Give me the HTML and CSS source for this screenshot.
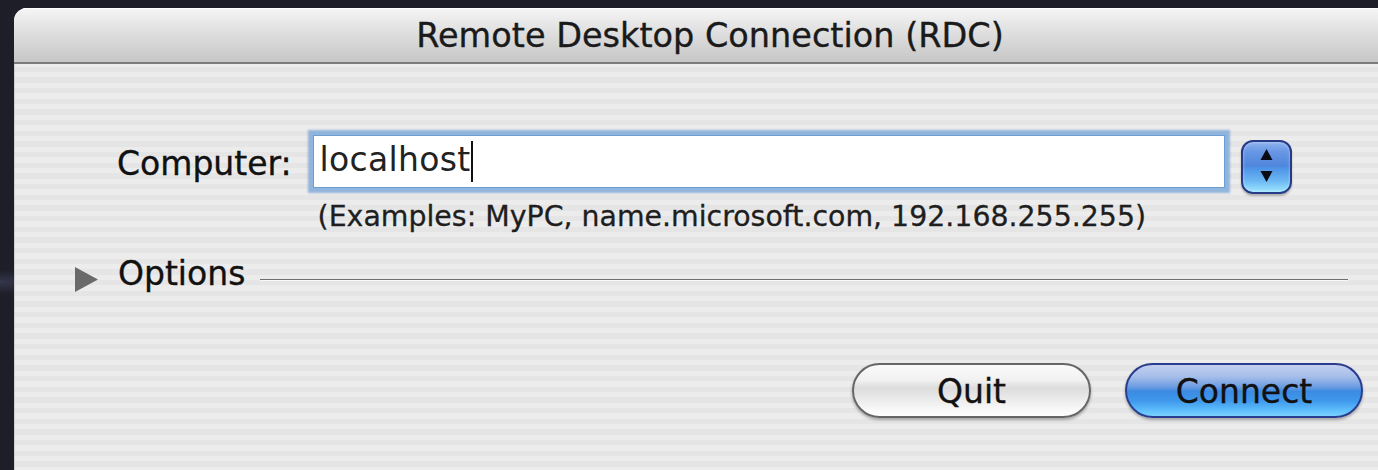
FILE: index.html
```html
<!DOCTYPE html>
<html lang="en">
<head>
<meta charset="utf-8">
<title>Remote Desktop Connection (RDC)</title>
<link rel="stylesheet" href="styles.css">
</head>
<body>
<div class="window">
  <div class="titlebar">Remote Desktop Connection (RDC)</div>
  <div class="content">
    <div class="form-grid">
      <label class="label" for="computer">Computer:</label>
      <div class="field">
        <span class="field-text">localhost</span><span class="caret"></span>
      </div>
      <div class="stepper">
        <svg class="stepper-arrows" width="51" height="54" viewBox="0 0 51 54">
          <polygon points="25.5,9 31.5,20 19.5,20" fill="#0a0a14"/>
          <polygon points="19.5,31 31.5,31 25.5,42" fill="#0a0a14"/>
        </svg>
      </div>
      <div class="hint">(Examples: MyPC, name.microsoft.com, 192.168.255.255)</div>
    </div>

    <div class="options-row">
      <svg class="disclosure" width="24" height="27" viewBox="0 0 24 27">
        <polygon points="1,1 24,13.5 1,26" fill="#6a6a6a"/>
      </svg>
      <span class="options-label">Options</span>
      <span class="options-rule"></span>
    </div>

    <div class="button-row">
      <button class="btn btn-plain" type="button">Quit</button>
      <button class="btn btn-default" type="button">Connect</button>
    </div>
  </div>
</div>
</body>
</html>
```

FILE: styles.css
```css
html, body {
  margin: 0;
  padding: 0;
}

body {
  width: 1378px;
  height: 470px;
  overflow: hidden;
  background:
    radial-gradient(ellipse at 0 60%, #34364a 0, rgba(40,42,56,0) 60px),
    #1d1e27;
  font-family: "DejaVu Sans", "Verdana", sans-serif;
  color: #111;
}

.window {
  margin: 8px 0 0 14px;
  width: 1392px;
  height: 462px;
  border-radius: 13px 13px 0 0;
  overflow: hidden;
  display: flex;
  flex-direction: column;
  background: repeating-linear-gradient(to bottom,
    #ececec 0, #ececec 5.33px,
    #e5e5e5 5.33px, #e5e5e5 10.67px);
}

.titlebar {
  height: 56px;
  flex: none;
  display: flex;
  align-items: center;
  justify-content: center;
  font-size: 33.5px;
  line-height: 38px;
  padding-top: 1px;
  box-sizing: border-box;
  color: #1a1a1a;
  -webkit-text-stroke: 0.35px #1a1a1a;
  background: linear-gradient(to bottom, #f6f6f6 0, #e6e6e6 30%, #d4d4d4 70%, #c6c6c6 100%);
  border-bottom: 2px solid #7c7c7c;
  box-shadow: inset 0 1px 0 #fdfdfd;
}

.content {
  flex: 1;
  padding: 71px 43px 0 59px;
  display: flex;
  flex-direction: column;
  border-left: 1px solid #cfcfcf;
}

/* Computer field, stepper and hint line */
.form-grid {
  margin-left: 43px;
  display: grid;
  grid-template-columns: max-content max-content max-content;
  align-items: start;
}

.label {
  font-size: 33px;
  line-height: 38px;
  margin-top: 10px;
  color: #111;
  -webkit-text-stroke: 0.35px #111;
}

.field {
  margin-left: 21px;
  width: 912px;
  height: 53px;
  box-sizing: border-box;
  background: #fff;
  border: 1px solid #6f9dd0;
  box-shadow: 0 0 0 2px #8db5df, 0 0 2px 5px rgba(125,168,215,0.8);
  padding: 5px 0 0 6px;
  display: flex;
  align-items: flex-start;
}

.field-text {
  font-size: 33px;
  line-height: 38px;
  color: #222;
  letter-spacing: 0.3px;
}

.caret {
  width: 2px;
  height: 41px;
  margin-left: 1px;
  background: #111;
}

.stepper {
  margin-left: 16px;
  margin-top: 5px;
  width: 51px;
  height: 54px;
  box-sizing: border-box;
  border: 2px solid #263a85;
  border-radius: 12px;
  background:
    linear-gradient(to bottom,
      #8fb2ee 0, #6796e4 20%, #4f86dc 48%,
      #4d92e6 52%, #6cb8f4 78%, #9fe6ff 100%);
  box-shadow: 0 2px 2px rgba(0,0,0,0.25), inset 0 0 3px rgba(255,255,255,0.5);
  position: relative;
  overflow: hidden;
}

.stepper-arrows {
  position: absolute;
  left: -2px;
  top: -2px;
}

.hint {
  grid-column: 2;
  margin-left: 26px;
  margin-top: 7px;
  font-size: 28.4px;
  line-height: 32px;
  color: #1e1e1e;
  -webkit-text-stroke: 0.3px #1e1e1e;
}

/* Disclosure row */
.options-row {
  margin-top: 22px;
  display: flex;
  align-items: flex-start;
  height: 38px;
}

.disclosure {
  margin-top: 11px;
  flex: none;
}

.options-label {
  margin-left: 20px;
  font-size: 33px;
  line-height: 38px;
  color: #111;
  -webkit-text-stroke: 0.35px #111;
}

.options-rule {
  flex: 1;
  margin: 24px 15px 0 15px;
  height: 1px;
  background: #6e6e6e;
  box-shadow: 0 1px 0 #f8f8f8;
}

/* Push buttons */
.button-row {
  margin-top: 70px;
  display: flex;
  justify-content: flex-end;
  gap: 34px;
}

.btn {
  height: 55px;
  border-radius: 28px;
  box-sizing: border-box;
  font-family: inherit;
  font-size: 33px;
  line-height: 38px;
  padding: 2px 0 0;
  color: #111;
  -webkit-text-stroke: 0.35px #111;
  box-shadow: 0 2px 3px rgba(0,0,0,0.3);
}

.btn-plain {
  width: 239px;
  border: 2px solid #666;
  background: linear-gradient(to bottom,
    #fbfbfb 0, #f1f1f1 30%, #dcdcdc 45%, #e6e6e6 60%, #f7f7f7 85%, #ffffff 100%);
}

.btn-default {
  width: 238px;
  border: 2px solid #2a3d8e;
  background: linear-gradient(to bottom,
    #c3cff0 0, #a7bfea 22%, #6f9ee2 42%, #3c8be3 52%, #3f98ec 70%, #5cbcfb 88%, #7ad2ff 100%);
}
```
